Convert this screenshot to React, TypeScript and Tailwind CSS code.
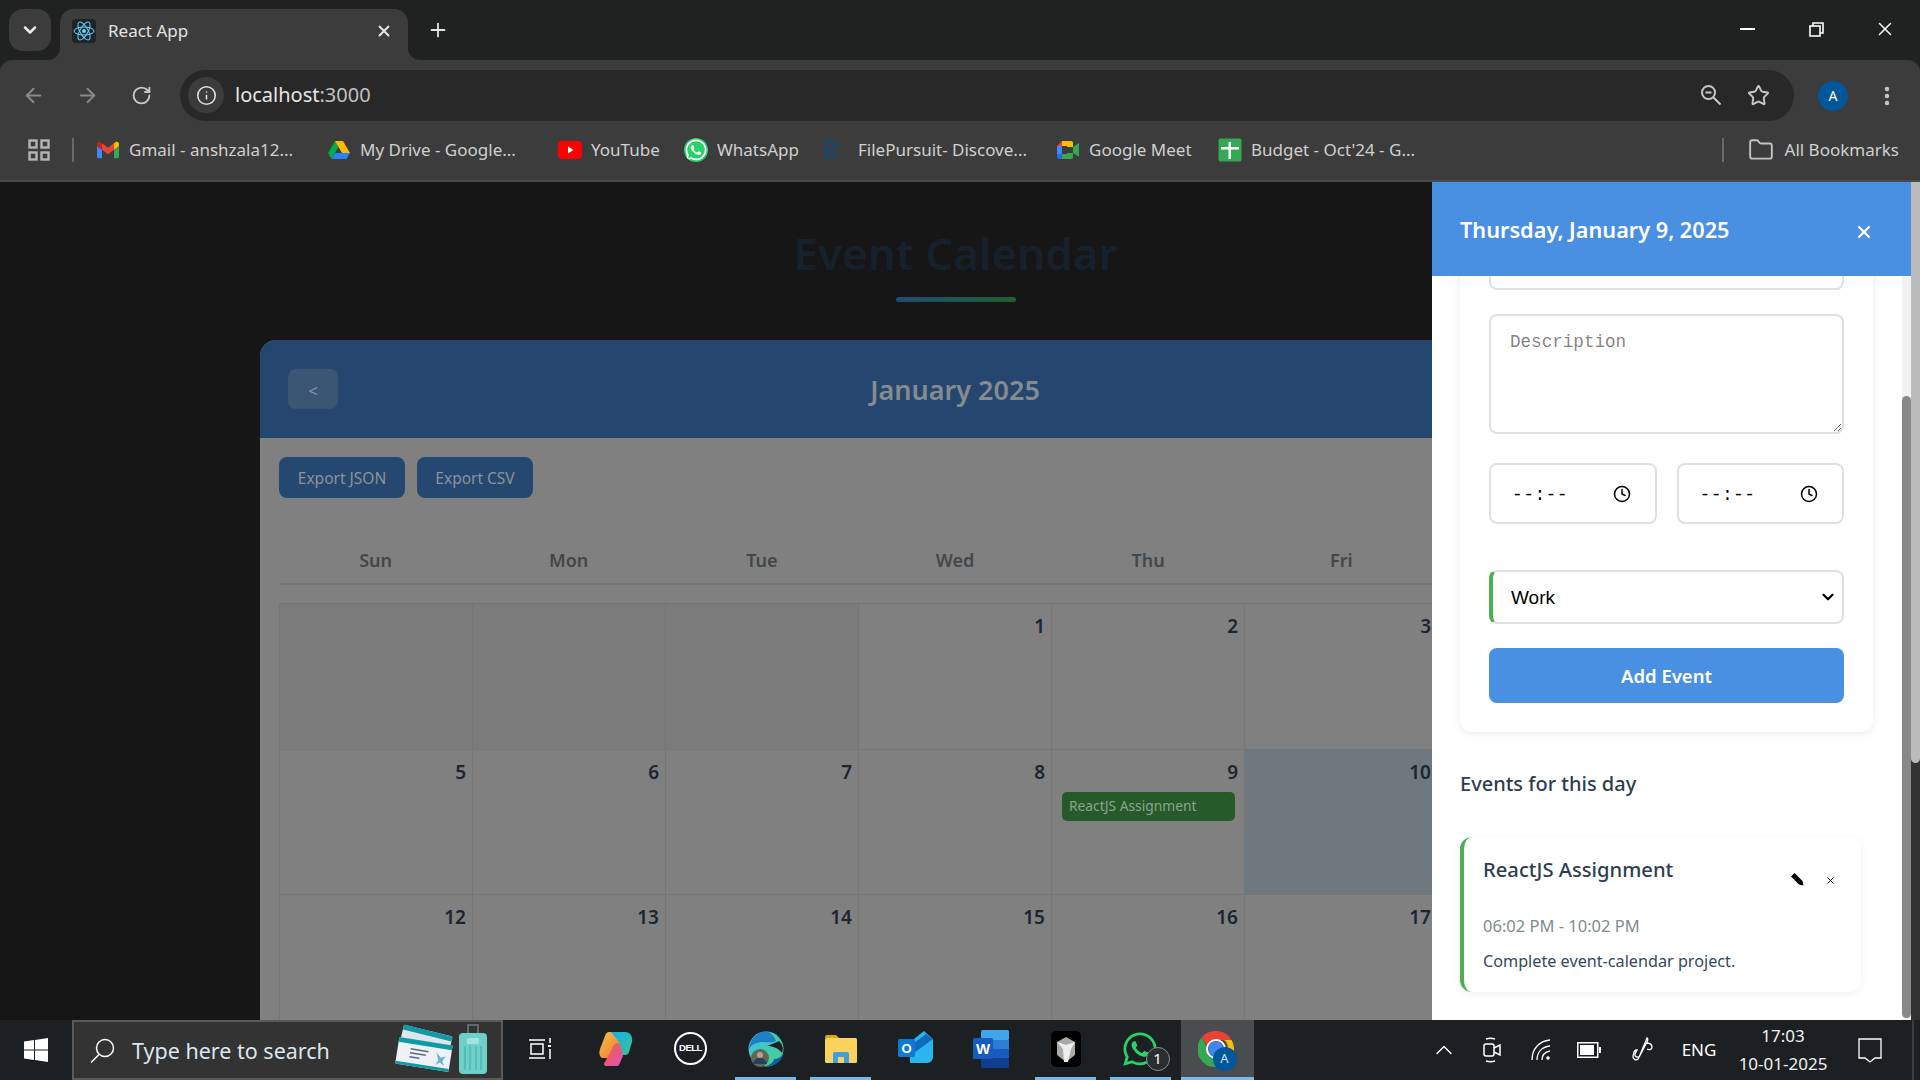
import React from 'react';
import { ArrowLeft, ArrowRight, ChevronDown, ChevronUp, Clock, EllipsisVertical, Folder, Info, Plus, RotateCw, Star, X } from 'lucide-react';
import { FaWhatsapp } from 'react-icons/fa';

const ReactLogo = () => (
  <svg viewBox="0 0 24 24" className="w-6 h-6 bg-[#20232a] rounded-sm" fill="none" stroke="#61dafb" strokeWidth="1">
    <circle cx="12" cy="12" r="2" fill="#61dafb" stroke="none" />
    <ellipse cx="12" cy="12" rx="10" ry="4" />
    <ellipse cx="12" cy="12" rx="10" ry="4" transform="rotate(60 12 12)" />
    <ellipse cx="12" cy="12" rx="10" ry="4" transform="rotate(120 12 12)" />
  </svg>
);

const Gmail = () => (
  <svg viewBox="0 0 24 24" className="w-[22px] h-[22px]">
    <path fill="#4285F4" d="M1.636 21h3.819v-9.273L0 7.636v11.728C0 20.27.73 21 1.636 21" />
    <path fill="#34A853" d="M18.545 21h3.819C23.27 21 24 20.27 24 19.364V7.636l-5.455 4.091" />
    <path fill="#FBBC04" d="M18.545 4.636v7.091L24 7.636V5.455c0-2.023-2.31-3.178-3.927-1.964" />
    <path fill="#EA4335" d="M5.455 11.727V4.636L12 9.545l6.545-4.909v7.091L12 16.636" />
    <path fill="#C5221F" d="M0 5.455v2.181l5.455 4.091V4.636L3.927 3.491C2.31 2.277 0 3.432 0 5.455" />
  </svg>
);

const Drive = () => (
  <svg viewBox="0 0 24 24" className="w-6 h-6">
    <path fill="#00ac47" d="M8 3 1 15l3.500 6 7-12z" />
    <path fill="#ffba00" d="M8 3h8l7 12h-8z" />
    <path fill="#2684fc" d="M4.500 21h15L23 15H8z" />
  </svg>
);

const Youtube = () => (
  <svg viewBox="0 0 24 24" className="w-6 h-6">
    <rect x="0" y="3" width="24" height="18" rx="4" fill="#ff0000" />
    <path d="M10 8.500v7l5.500-3.500z" fill="#fff" />
  </svg>
);

const FilePursuit = () => (
  <svg viewBox="0 0 18 24" className="w-[18px] h-6 -translate-x-[5px]" fill="none" stroke="#0f4c75" strokeWidth="2">
    <path d="M3 23V2l12 6-9 5 7 4-7 5" />
  </svg>
);

const Meet = () => (
  <svg viewBox="0 0 24 24" className="w-6 h-6">
    <path fill="#ea4335" d="M6 3h4v5H1z" />
    <path fill="#4285f4" d="M1 8h5v8H1z" />
    <path fill="#1a73e8" d="M1 16h5v5H3a2 2 0 0 1-2-2z" />
    <path fill="#fbbc04" d="M6 3h9a2 2 0 0 1 2 2v4h-6V8H6z" />
    <path fill="#34a853" d="M6 16h5v-1h6v4a2 2 0 0 1-2 2H6zM17 9l6-4v14l-6-4z" />
    <path fill="#3c3c3c" d="M6 8h5v8H6z" />
  </svg>
);

const Sheets = () => (
  <svg viewBox="0 0 24 24" className="w-6 h-6">
    <rect x="0.500" y="0.500" width="23" height="23" rx="2" fill="#34a853" />
    <path d="M3 9h18v2.500H3zM10.500 4H13v17h-2.500z" fill="#fff" />
  </svg>
);

const ZoomLens = () => (
  <svg viewBox="0 0 22 22" className="w-[22px] h-[22px] ml-auto" fill="none" stroke="#c8c8c8" strokeWidth="2">
    <circle cx="8.500" cy="8.500" r="6.500" />
    <path d="M5.500 8.500h6M13.500 13.500l7 7" />
  </svg>
);

const bookmarks: { label: string; icon: React.ReactNode; ml: string; tw: string }[] = [
  { label: 'Gmail - anshzala12...', icon: <Gmail />, ml: 'ml-[22px]', tw: 'w-[163px]' },
  { label: 'My Drive - Google...', icon: <Drive />, ml: 'ml-[35px]', tw: 'w-[160px]' },
  { label: 'YouTube', icon: <Youtube />, ml: 'ml-[38px]', tw: 'w-[70px]' },
  { label: 'WhatsApp', icon: <FaWhatsapp className="w-6 h-6 text-white bg-[#25d366] rounded-full" />, ml: 'ml-[23px]', tw: 'w-[84px]' },
  { label: 'FilePursuit- Discove...', icon: <FilePursuit />, ml: 'ml-[24px]', tw: 'w-[170px]' },
  { label: 'Google Meet', icon: <Meet />, ml: 'ml-[28px]', tw: 'w-[105px]' },
  { label: "Budget - Oct'24 - G...", icon: <Sheets />, ml: 'ml-[24px]', tw: 'w-[170px]' },
];

const ChromeFrame = () => (
  <div className="shrink-0 bg-[#202222] font-['Noto_Sans',sans-serif]">
    <div className="h-[60px] flex items-start relative">
      <div className="ml-[9px] mt-[9px] w-[42px] h-[42px] rounded-[14px] bg-[#3c3c3c] flex items-center justify-center">
        <ChevronDown size={20} strokeWidth={3} className="text-[#e8e8e8]" />
      </div>
      <div className="ml-[9px] mt-[9px] w-[348px] h-[51px] rounded-t-[14px] bg-[#3c3c3c] flex items-center pl-3 pr-[15px] pb-[7px] relative">
        <ReactLogo />
        <span className="ml-3 text-[17px] text-[#e3e3e3]">React App</span>
        <X size={18} strokeWidth={2.5} className="ml-auto text-[#e8e8e8]" />
        <svg viewBox="0 0 12 12" className="absolute -left-3 bottom-0 w-3 h-3"><path d="M12 0v12H0A12 12 0 0 0 12 0z" fill="#3c3c3c" /></svg>
        <svg viewBox="0 0 12 12" className="absolute -right-3 bottom-0 w-3 h-3"><path d="M0 0v12h12A12 12 0 0 1 0 0z" fill="#3c3c3c" /></svg>
      </div>
      <Plus size={22} strokeWidth={2} className="ml-[19px] mt-[19px] text-[#e3e3e3]" />
      <div className="ml-auto flex h-[58px] items-center text-white">
        <div className="w-[15px] h-[2px] bg-white mr-[54px]" />
        <svg viewBox="0 0 15 15" className="w-[15px] h-[15px] mr-[50px]" fill="none" stroke="#fff" strokeWidth="1.600">
          <rect x="1" y="4" width="10" height="10" />
          <path d="M4 4V1h10v10h-3" />
        </svg>
        <X size={22} strokeWidth={1.6} className="mr-6" />
      </div>
    </div>
    <div className="h-[122px] bg-[#3c3c3c] rounded-t-xl border-b-2 border-[#4a4a4a]">
      <div className="h-[70px] flex items-center pt-[1px]">
        <ArrowLeft size={23} className="ml-[22px] text-[#8a8a8a]" />
        <ArrowRight size={23} className="ml-[31px] text-[#8a8a8a]" />
        <RotateCw size={21} strokeWidth={2.2} className="ml-[32px] text-[#c8c8c8]" />
        <div className="ml-[28px] w-[1614px] h-[51px] rounded-full bg-[#282828] flex items-center pl-2 pr-[24px] mt-[-1px]">
          <div className="w-9 h-9 rounded-full bg-[#3c3c3c] flex items-center justify-center">
            <Info size={21} strokeWidth={1.8} className="text-[#e0e0e0]" />
          </div>
          <span className="ml-[11px] text-[20px] text-[#e6e6e6]">localhost<span className="text-[#c0c0c0]">:3000</span></span>
          <ZoomLens />
          <Star size={23} strokeWidth={2} className="ml-[25px] text-[#c8c8c8]" />
        </div>
        <div className="ml-[24px] w-[30px] h-[30px] rounded-full bg-[#01579b] text-white text-[14px] flex items-center justify-center">A</div>
        <EllipsisVertical size={24} strokeWidth={2.4} className="ml-[27px] text-[#c8c8c8]" />
      </div>
      <div className="h-[38px] flex items-center text-[17px] text-[#d0d0d0] pt-[1px]">
        <svg viewBox="0 0 22 22" className="ml-[28px] w-[22px] h-[22px]" fill="none" stroke="#b4b4b4" strokeWidth="2.400">
          <rect x="1.500" y="1.500" width="7" height="7" />
          <rect x="13.500" y="1.500" width="7" height="7" />
          <rect x="1.500" y="13.500" width="7" height="7" />
          <rect x="13.500" y="13.500" width="7" height="7" />
        </svg>
        <div className="ml-[22px] w-[2px] h-6 bg-[#6a6a6a]" />
        {bookmarks.map((b) => (
          <div key={b.label} className={`flex items-center ${b.ml}`}>
            <span className="w-6 flex justify-center">{b.icon}</span>
            <span className={`ml-[9px] whitespace-nowrap ${b.tw}`}>{b.label}</span>
          </div>
        ))}
        <div className="ml-auto w-[2px] h-6 bg-[#6a6a6a]" />
        <Folder size={26} strokeWidth={1.7} className="ml-[24px] text-[#c4c4c4]" />
        <span className="ml-[11px] mr-[21px] text-[#d0d0d0]">All Bookmarks</span>
      </div>
    </div>
  </div>
);

// the Saturday column sits behind the side panel
const weeks = [
  ['', '', '', '1', '2', '3', '-'],
  ['5', '6', '7', '8', '9', '10', '-'],
  ['12', '13', '14', '15', '16', '17', '-'],
];
const weekdays = ['Sun', 'Mon', 'Tue', 'Wed', 'Thu', 'Fri', ''];

const CalendarPage = () => (
  <div className="flex-1 min-w-0 h-full overflow-hidden bg-[#161616] pt-[40px]">
    <h1 className="text-center text-[44px] leading-[62px] font-semibold text-[#16212c]">Event Calendar</h1>
    <div className="w-[120px] h-[5px] mx-auto mt-[13px] rounded-full bg-gradient-to-r from-[#254871] to-[#265c2c]" />
    <div className="ml-[260px] w-[1390px] mt-[38px] rounded-t-2xl bg-[#808080]">
      <div className="h-[98px] rounded-t-2xl bg-[#25476f] relative flex items-center justify-center">
        <div className="absolute left-[28px] top-[29px] w-[50px] h-[40px] rounded-lg bg-[#3b5674] text-[#8a96a3] text-[16px] pt-[3px] flex items-center justify-center">&lt;</div>
        <h2 className="text-[27px] font-semibold text-[#868b90] pt-[2px]">January 2025</h2>
      </div>
      <div className="px-[19px] pt-[19px]">
        <div className="flex gap-3">
          <div className="w-[126px] h-[41px] pt-[2px] rounded-lg bg-[#254871] text-[#8d9297] text-[15.500px] flex items-center justify-center">Export JSON</div>
          <div className="w-[116px] h-[41px] pt-[2px] rounded-lg bg-[#254871] text-[#8d9297] text-[15.500px] flex items-center justify-center">Export CSV</div>
        </div>
        <div className="grid grid-cols-7 mt-[40px] h-[47px] border-b-2 border-[#767676]">
          {weekdays.map((d, i) => (
            <div key={i} className="text-center text-[18px] leading-[44px] font-semibold text-[#43474a]">{d}</div>
          ))}
        </div>
        <div className="mt-[18px] grid grid-cols-7 border-t border-l border-[#767676]">
          {weeks.flat().map((n, i) => (
            <div key={i} className={`h-[145.500px] border-r border-b border-[#767676] pl-2 pr-[6px] py-[8px] ${n === '' ? 'bg-[#7c7c7c]' : n === '10' ? 'bg-[#6f777f]' : ''}`}>
              <div className="text-right text-[19px] leading-[28px] font-semibold text-[#1c2530]">{n === '-' ? '' : n}</div>
              {n === '9' && (
                <div className="mt-[6px] ml-[2px] w-[173px] h-[29px] rounded-[5px] bg-[#275a2a] text-[#8aa58c] text-[13.800px] leading-[27px] pl-[7px] whitespace-nowrap">ReactJS Assignment</div>
              )}
            </div>
          ))}
        </div>
      </div>
    </div>
  </div>
);

const TimeField = () => (
  <div className="flex-1 h-[61px] rounded-lg border-2 border-[#e0e0e0] flex items-center pl-[21px] pr-[24px]">
    <span className="font-['Liberation_Mono',monospace] text-[18px] leading-[24px] pt-[2px] text-black tracking-[0.4px]">--:--</span>
    <Clock size={18} strokeWidth={2} className="ml-auto text-black" />
  </div>
);

const SidePanel = () => (
  <div className="absolute top-0 bottom-0 right-0 w-[479px] bg-white flex flex-col">
    <div className="h-[94px] shrink-0 bg-[#4a90e2] flex items-center pl-[28px] pr-[37px] pt-[2px] relative z-10">
      <h2 className="text-[21.700px] font-semibold text-white">Thursday, January 9, 2025</h2>
      <X size={20} strokeWidth={2.6} className="ml-auto mt-[4px] text-white" />
    </div>
    <div className="flex-1 min-h-0 flex">
      <div className="flex-1 min-w-0 overflow-hidden pl-[28px]">
        <div className="w-[413px] -mt-[40px] px-[29px] pb-[29px] rounded-xl bg-white shadow-[0_2px_10px_rgba(0,0,0,0.08)]">
          <div className="h-[54px] rounded-lg border-2 border-[#e0e0e0]" />
          <textarea
            placeholder="Description"
            className="mt-[24px] block w-full h-[120px] rounded-lg border-2 border-[#e0e0e0] px-[19px] py-[15px] font-['Liberation_Mono',monospace] text-[17.600px] leading-[22px] outline-none"
          />
          <div className="mt-[29px] flex gap-[20px]">
            <TimeField />
            <TimeField />
          </div>
          <div className="mt-[46px] relative">
            <select className="block w-full h-[54px] appearance-none rounded-lg border-2 border-l-4 border-[#e0e0e0] border-l-[#4caf50] pl-[18px] pt-[2px] font-['Liberation_Sans',sans-serif] text-[19px] text-black bg-white outline-none">
              <option>Work</option>
            </select>
            <ChevronDown size={18} strokeWidth={3} className="absolute right-[7px] top-[18px] text-black pointer-events-none" />
          </div>
          <div className="mt-[24px] h-[55px] pt-[1px] rounded-lg bg-[#4a90e2] text-white text-[18.500px] font-semibold flex items-center justify-center">Add Event</div>
        </div>
        <h3 className="mt-[37px] text-[20px] leading-[30px] font-medium text-[#2c3e50]">Events for this day</h3>
        <div className="mt-[38px] w-[401px] h-[155px] rounded-xl border-l-4 border-[#4caf50] bg-white shadow-[0_2px_8px_rgba(0,0,0,0.06)] pl-[19px] pr-[24px] pt-[16px] relative">
          <h4 className="text-[20.200px] leading-[32px] font-medium text-[#2c3e50]">ReactJS Assignment</h4>
          <p className="mt-[29px] text-[16.500px] leading-[24px] text-[#7f8c8d]">06:02 PM - 10:02 PM</p>
          <p className="mt-[11px] text-[16.200px] leading-[24px] text-[#34495e]">Complete event-calendar project.</p>
          <svg viewBox="0 0 13 13" className="absolute left-[327px] top-[36px] w-[13px] h-[13px]">
            <path d="M0 3.500 3.500 0l8 8 1 4.500-4.500-1z" fill="#000" />
          </svg>
          <X size={11} strokeWidth={2} className="absolute left-[361px] top-[38px] text-black" />
        </div>
      </div>
      <div className="w-[9px] shrink-0 bg-[#f1f1f1] pt-[120px] pb-[2px]">
        <div className="h-full rounded-full bg-[#888]" />
      </div>
    </div>
  </div>
);

const WindowsLogo = () => (
  <svg viewBox="0 0 24 24" className="w-6 h-6" fill="#fff">
    <path d="M0 3.400 10 2v9.500H0zM11 1.900 24 0v11.500H11zM0 12.500h10V22L0 20.600zM11 12.500h13V24l-13-1.900z" />
  </svg>
);

const Magnifier = () => (
  <svg viewBox="0 0 25 25" className="w-[25px] h-[25px]" fill="none" stroke="#fff" strokeWidth="1.500">
    <circle cx="15" cy="10" r="8.500" />
    <path d="M9 16.500 1 24.500" />
  </svg>
);

const Tickets = () => (
  <svg viewBox="0 0 60 52" className="w-[60px] h-[52px]">
    <g transform="rotate(14 30 20)">
      <rect x="6" y="6" width="50" height="26" rx="1.500" fill="#dfe4ea" />
      <rect x="6" y="6" width="50" height="5" fill="#0f9aa5" />
    </g>
    <g transform="rotate(9 30 30)">
      <rect x="3" y="17" width="54" height="27" rx="1.500" fill="#eef1f6" />
      <rect x="3" y="17" width="54" height="5" fill="#0f9aa5" />
      <rect x="3" y="41" width="54" height="3" fill="#0f9aa5" />
      <path d="M16 27h18M16 31h16M16 35h10" stroke="#5b6b88" strokeWidth="1.500" />
      <path d="M42 26l5 5 5-2-3 5 3 5-5-3-4 3 2-5z" fill="#6fb1d6" />
    </g>
  </svg>
);

const Luggage = () => (
  <svg viewBox="0 0 30 56" className="w-[30px] h-[56px]">
    <path d="M10 12V3h10v9" fill="none" stroke="#5d6a75" strokeWidth="2" />
    <rect x="1" y="11" width="28" height="41" rx="4" fill="#6fcfc9" />
    <rect x="9" y="16" width="12" height="6" rx="1" fill="#a3e3de" />
    <path d="M7 24v24M12 24v24M18 24v24M23 24v24" stroke="#3fa8a5" strokeWidth="1" />
    <rect x="5" y="52" width="4" height="3" fill="#33373d" />
    <rect x="21" y="52" width="4" height="3" fill="#33373d" />
  </svg>
);

const TaskView = () => (
  <svg viewBox="0 0 25 24" className="w-[25px] h-6" fill="none" stroke="#fff" strokeWidth="1.500">
    <path d="M1 3h16M1 21h16M3 7h12v10H3zM22 1v5M22 12v10" />
    <rect x="20" y="8" width="3" height="2" fill="#fff" stroke="none" />
  </svg>
);

const Copilot = () => (
  <svg viewBox="0 0 34 36" className="w-[34px] h-9">
    <defs>
      <linearGradient id="cpa" x1="0" y1="0" x2="1" y2="1"><stop offset="0" stopColor="#1fa8f0" /><stop offset="1" stopColor="#32c88f" /></linearGradient>
      <linearGradient id="cpb" x1="0" y1="0" x2="1" y2="1"><stop offset="0" stopColor="#f5c33b" /><stop offset="1" stopColor="#f0703c" /></linearGradient>
      <linearGradient id="cpc" x1="0" y1="0" x2="1" y2="1"><stop offset="0" stopColor="#f2622e" /><stop offset="1" stopColor="#e24fc4" /></linearGradient>
    </defs>
    <path d="M10 1h12c4 0 5 3 3 7l-7 17c-1 2-3 3-5 2L3 27c-3-2-3-6-2-9l5-13c1-3 2-4 4-4z" fill="url(#cpb)" />
    <path d="M12 1h14c6 0 8 6 7 10l-3 10c-1 3-3 3-6 3-5-1-2-6-3-10-1-5-5-7-9-13z" fill="url(#cpa)" />
    <path d="M16 35H8c-3 0-4-2-2-4l9-17c2-3 6-2 7 1l2 10-4 9c-1 1-2 1-4 1z" fill="url(#cpc)" />
  </svg>
);

const Dell = () => (
  <div className="w-[33px] h-[33px] rounded-full border-2 border-white flex items-center justify-center text-white text-[9.500px] font-bold tracking-[-0.5px] font-['Liberation_Sans',sans-serif]">DELL</div>
);

const Edge = () => (
  <svg viewBox="0 0 36 36" className="w-9 h-9">
    <defs>
      <linearGradient id="ed1" x1="0" y1="0" x2="1" y2="1"><stop offset="0" stopColor="#36c3f0" /><stop offset="1" stopColor="#4ed07e" /></linearGradient>
    </defs>
    <circle cx="18" cy="18" r="17.500" fill="url(#ed1)" />
    <path d="M36 22c-2 8-9 14-18 13 6-2 8-5 8-7 4 0 7-2 10-6z" fill="#0f5fa8" />
    <path d="M19 15c6 0 11 2 15 7 2-5 0-9-3-12-3 2-8 3-12 5z" fill="#1c2023" />
    <path d="M18 0.500C10 0.500 2 7 1 18c3-5 8-7 14-7 5 0 10 1 13-1-2-5-6-9.500-10-9.500z" fill="#1e7fc4" />
    <circle cx="12" cy="27" r="9" fill="#5a6a5a" />
    <circle cx="12" cy="24" r="3" fill="#c89b7a" />
    <path d="M5 33c1-5 4-6 7-6s6 1 7 6z" fill="#28405f" />
  </svg>
);

const Explorer = () => (
  <svg viewBox="0 0 32 30" className="w-8 h-[30px]">
    <path d="M0 3a2 2 0 0 1 2-2h9l3 3h-14z" fill="#e0a70f" />
    <rect x="0" y="4" width="32" height="25" rx="1.500" fill="#fbd35c" />
    <path d="M8 29V20a2 2 0 0 1 2-2h12a2 2 0 0 1 2 2v9h-5v-6h-6v6z" fill="#3f9fdc" />
  </svg>
);

const Outlook = () => (
  <svg viewBox="0 0 36 36" className="w-9 h-9">
    <path d="M16 8 26 0l9 8v18a6 6 0 0 1-6 6H12v-14z" fill="#29b5ee" />
    <path d="M16 12 28 3l7 5-19 14z" fill="#0f6cbd" />
    <rect x="0" y="8" width="17" height="18" rx="1.500" fill="#0f78d4" />
    <text x="8.500" y="22" textAnchor="middle" fontSize="13" fontWeight="700" fill="#fff" fontFamily="Liberation Sans">O</text>
  </svg>
);

const Word = () => (
  <svg viewBox="0 0 36 38" className="w-9 h-[38px]">
    <rect x="8" y="0" width="28" height="10" fill="#41a5ee" rx="1.500" />
    <rect x="8" y="10" width="28" height="9" fill="#2b7cd3" />
    <rect x="8" y="19" width="28" height="9" fill="#185abd" />
    <rect x="8" y="28" width="28" height="10" fill="#103f91" rx="1.500" />
    <rect x="0" y="8" width="20" height="21" rx="1.500" fill="#185abd" />
    <text x="10" y="24" textAnchor="middle" fontSize="15" fontWeight="700" fill="#fff" fontFamily="Liberation Sans">W</text>
  </svg>
);

const BlackApp = () => (
  <svg viewBox="0 0 30 36" className="w-[30px] h-9">
    <rect width="30" height="36" rx="5" fill="#000" />
    <path d="M15 6l9 5v13l-9 7-9-7V11z" fill="#aaa" />
    <path d="M6 11l9 3 9-3-4 7-3 13h-4l-1-13z" fill="#eee" />
  </svg>
);

const WhatsappTask = () => (
  <div className="relative w-[38px] h-[38px] -ml-[2px]">
    <FaWhatsapp className="w-[38px] h-[38px] text-[#25d366]" />
    <div className="absolute left-[25px] top-[17px] w-[24px] h-[24px] rounded-full bg-[#2a2e31] border border-[#8a8a8a] text-white text-[15px] flex items-center justify-center">1</div>
  </div>
);

const ChromeIcon = () => (
  <div className="relative w-9 h-9 -ml-[4px]">
    <svg viewBox="0 0 36 36" className="w-9 h-9">
      <path d="M18 0a18 18 0 0 1 15.600 9H18a9 9 0 0 0-8.500 6L3.500 6.500A18 18 0 0 1 18 0z" fill="#ea4335" />
      <path d="M33.600 9A18 18 0 0 1 19 36l8-13a9 9 0 0 0-1-14z" fill="#fbbc04" />
      <path d="M3.500 6.500 10 18a9 9 0 0 0 17 5l-8 13A18 18 0 0 1 3.500 6.500z" fill="#34a853" />
      <circle cx="18" cy="18" r="7.500" fill="#4285f4" />
      <circle cx="18" cy="18" r="9" fill="none" stroke="#fff" strokeWidth="2" />
    </svg>
    <div className="absolute left-[15px] top-[16px] w-6 h-6 rounded-full bg-[#01579b] text-[#cfe0ee] text-[13px] flex items-center justify-center">A</div>
  </div>
);

const tasks = [
  { icon: <TaskView />, on: false },
  { icon: <Copilot />, on: false },
  { icon: <Dell />, on: false },
  { icon: <Edge />, on: true },
  { icon: <Explorer />, on: true },
  { icon: <Outlook />, on: false },
  { icon: <Word />, on: false },
  { icon: <BlackApp />, on: true },
  { icon: <WhatsappTask />, on: true },
];

const Taskbar = () => (
  <div className="h-[60px] shrink-0 bg-[#1c2023] flex text-white font-['Noto_Sans',sans-serif]">
    <div className="w-[72px] flex items-center justify-center"><WindowsLogo /></div>
    <div className="w-[431px] border-2 border-[#5a5a5a] bg-[#333333] flex items-center pl-[16px] overflow-hidden">
      <Magnifier />
      <span className="ml-[17px] pt-[3px] text-[21.500px] text-[#dce6ee]">Type here to search</span>
      <div className="ml-auto flex items-center mr-[13px]">
        <Tickets />
        <span className="ml-[4px]"><Luggage /></span>
      </div>
    </div>
    {tasks.map((t, i) => (
      <div key={i} className="w-[75px] flex flex-col items-center">
        <div className="flex-1 flex items-center justify-center">{t.icon}</div>
        <div className={`w-[61px] h-[3px] ${t.on ? 'bg-[#76b9ed]' : ''}`} />
      </div>
    ))}
    <div className="ml-[3px] w-[73px] bg-[#4a4d4f] flex flex-col items-center">
      <div className="flex-1 flex items-center justify-center"><ChromeIcon /></div>
      <div className="w-full h-[3px] bg-[#76b9ed]" />
    </div>
    <div className="ml-auto flex items-center h-full">
      <div className="w-[48px] flex justify-center"><ChevronUp size={28} strokeWidth={1.2} /></div>
      <div className="w-[48px] flex justify-center">
        <svg viewBox="0 0 20 26" className="w-5 h-[26px]" fill="none" stroke="#fff" strokeWidth="1.500">
          <rect x="2" y="7" width="10" height="12" rx="2" />
          <path d="M12 11l6-3v10l-6-3M4 2c3-1 6-1 9 0M4 24c3 1 6 1 9 0" />
        </svg>
      </div>
      <div className="w-[50px] flex justify-center">
        <svg viewBox="0 0 20 22" className="w-5 h-[22px]" fill="none" stroke="#fff" strokeWidth="1.300">
          <path d="M1 21C1 10 8 2 19 1M6 21c0-8 5-13 13-14M11 21c0-5 3-8 8-9" />
          <circle cx="17" cy="19" r="1.800" fill="#fff" stroke="none" />
        </svg>
      </div>
      <div className="w-[46px] flex justify-center">
        <svg viewBox="0 0 24 16" className="w-6 h-4">
          <rect x="0.750" y="0.750" width="20" height="14.500" fill="none" stroke="#fff" strokeWidth="1.500" />
          <rect x="3" y="3" width="14" height="10" fill="#fff" />
          <rect x="22" y="5" width="2" height="6" fill="#fff" />
        </svg>
      </div>
      <div className="w-[60px] flex justify-center">
        <svg viewBox="0 0 22 26" className="w-[22px] h-[26px]" fill="none" stroke="#fff" strokeWidth="1.300">
          <path d="M16 1l-7 17a2.500 2.500 0 0 1-5-1l2-4a3 3 0 0 0-3 2l-1 4c-.5 3 3 5 5 3l9-17c1-2 1-4 0-4zM15 6c3 0 6 1 6 4s-3 3-5 2" />
        </svg>
      </div>
      <div className="w-[54px] text-center text-[17px]">ENG</div>
      <div className="w-[114px] text-center text-[17px] leading-[28px] text-[#f0f0f0]">
        <div>17:03</div>
        <div>10-01-2025</div>
      </div>
      <div className="w-[60px] flex justify-center">
        <svg viewBox="0 0 24 25" className="w-6 h-[25px]" fill="none" stroke="#fff" strokeWidth="1.300">
          <path d="M1 1h22v19h-6l-5 4-5-4H1z" />
        </svg>
      </div>
      <div className="w-[20px] h-full border-r-2 border-[#3a3e41] mr-[6px] -ml-[6px]" />
    </div>
  </div>
);

export default function App() {
  return (
    <div className="h-screen w-screen flex flex-col overflow-hidden font-['Noto_Sans',sans-serif]">
      <ChromeFrame />
      <div className="flex-1 min-h-0 flex">
        <div className="flex-1 min-w-0 relative">
          <CalendarPage />
          <SidePanel />
        </div>
        <div className="w-[9px] shrink-0 bg-[#333]">
          <div className="h-[581px] rounded-b-full bg-[#bbb]" />
        </div>
      </div>
      <Taskbar />
    </div>
  );
}
